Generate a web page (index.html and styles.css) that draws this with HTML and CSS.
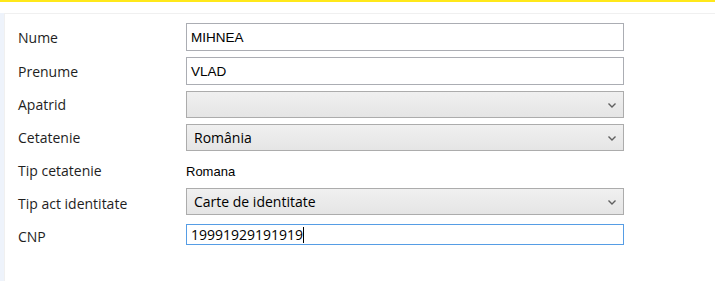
FILE: index.html
```html
<!DOCTYPE html>
<html lang="ro">
<head>
    <meta charset="UTF-8">
    <title>Date persoana</title>
    <link rel="stylesheet" href="styles.css">
</head>
<body>
    <div class="topline"></div>
    <div class="workspace">
        <div class="sidebar"></div>
        <div class="panel">
            <div class="form">
                <div class="row r1">
                    <label>Nume</label>
                    <div class="textbox">MIHNEA</div>
                </div>
                <div class="row r2">
                    <label>Prenume</label>
                    <div class="textbox">VLAD</div>
                </div>
                <div class="row r3">
                    <label>Apatrid</label>
                    <div class="combo">
                        <span></span>
                        <svg class="chevron" width="8" height="5" viewBox="0 0 8 5"><path d="M0.5 0.5 L4 4 L7.5 0.5" fill="none" stroke="#606060" stroke-width="1.4"/></svg>
                    </div>
                </div>
                <div class="row r4">
                    <label>Cetatenie</label>
                    <div class="combo">
                        <span>România</span>
                        <svg class="chevron" width="8" height="5" viewBox="0 0 8 5"><path d="M0.5 0.5 L4 4 L7.5 0.5" fill="none" stroke="#606060" stroke-width="1.4"/></svg>
                    </div>
                </div>
                <div class="row r5">
                    <label>Tip cetatenie</label>
                    <div class="plain">Romana</div>
                </div>
                <div class="row r6">
                    <label>Tip act identitate</label>
                    <div class="combo">
                        <span>Carte de identitate</span>
                        <svg class="chevron" width="8" height="5" viewBox="0 0 8 5"><path d="M0.5 0.5 L4 4 L7.5 0.5" fill="none" stroke="#606060" stroke-width="1.4"/></svg>
                    </div>
                </div>
                <div class="row r7">
                    <label>CNP</label>
                    <div class="textbox focused">19991929191919<span class="caret"></span></div>
                </div>
            </div>
        </div>
    </div>
</body>
</html>
```

FILE: styles.css
```css
body {
    margin: 0;
    background: #ffffff;
    font-family: 'Open Sans', Arial, sans-serif;
    color: #1e1e1e;
    height: 281px;
    overflow: hidden;
}
.topline {
    height: 2px;
    background-color: #ffe81a;
}
.workspace {
    display: flex;
    margin-top: 11px;
    height: 268px;
}
.sidebar {
    width: 4px;
    background-color: #eef3fb;
}
.panel {
    flex: 1;
    border-top: 1px solid #f0f0f0;
    border-left: 1px solid #f0f0f0;
}
.form {
    padding: 9px 0 0 13px;
}
.row {
    display: flex;
    align-items: center;
    margin-bottom: 6px;
}
.row label {
    width: 168px;
    font-size: 14px;
    line-height: 18px;
    padding-top: 2px;
}
.r1, .r2 { height: 28px; }
.r3, .r4, .r6 { height: 27px; }
.r3 label, .r4 label { padding-top: 1px; }
.r4 { margin-bottom: 3px; }
.r5 { height: 34px; margin-bottom: 0; }
.r5 label { padding-top: 0; }
.r6 { margin-bottom: 9px; }
.r6 label, .r7 label { padding-top: 5px; }
.r7 { height: 21px; }
.textbox {
    box-sizing: border-box;
    width: 438px;
    height: 100%;
    border: 1px solid #abadb3;
    padding: 0 4px;
    display: flex;
    align-items: center;
    font-family: 'Liberation Sans', Arial, sans-serif;
    font-size: 13.5px;
    color: #000;
}
.textbox.focused {
    border-color: #569de5;
    font-family: 'Open Sans', Arial, sans-serif;
    font-size: 14px;
}
.caret {
    display: inline-block;
    width: 1px;
    height: 16px;
    background: #000;
}
.combo {
    box-sizing: border-box;
    width: 438px;
    height: 100%;
    border: 1px solid #acacac;
    background: linear-gradient(#f0f0f0, #e5e5e5);
    display: flex;
    align-items: center;
    justify-content: space-between;
    padding: 0 7px 0 7px;
    font-size: 14px;
    color: #000;
}
.chevron {
    margin-top: 1px;
}
.plain {
    font-family: 'Liberation Sans', Arial, sans-serif;
    font-size: 13px;
    color: #000;
}
```
